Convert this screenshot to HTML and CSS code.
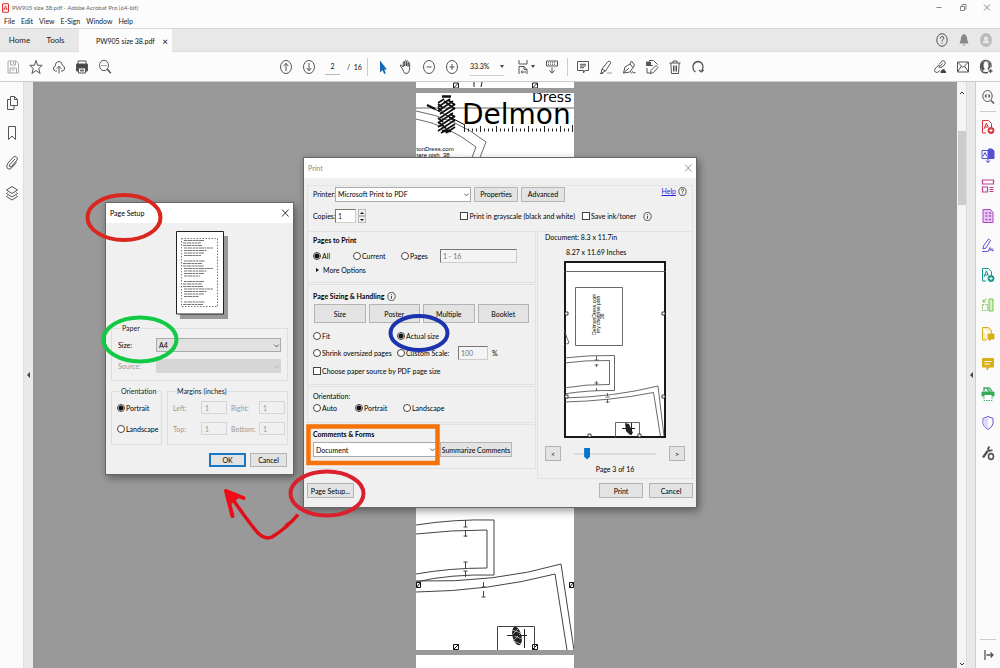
FILE: index.html
```html
<!DOCTYPE html>
<html lang="en">
<head>
<meta charset="utf-8">
<title>PW905 size 38.pdf - Adobe Acrobat Pro (64-bit)</title>
<link rel="stylesheet" href="styles.css">
</head>
<body>
<div class="app">
  <header class="titlebar">
    <svg class="logo" viewBox="0 0 8 11"><rect x=".6" y=".6" width="6.8" height="9.8" rx="1" fill="#fff" stroke="#d33" stroke-width="1.2"/><path d="M2 8 4 3l1.800 4.500M2 6.500h4" fill="none" stroke="#d33"/></svg>
    <span class="title">PW905 size 38.pdf - Adobe Acrobat Pro (64-bit)</span>
    <div class="wincontrols">
      <svg class="ic" viewBox="0 0 16 16"><path d="M5.500 7.500h5"/></svg>
      <svg class="ic" viewBox="0 0 16 16"><path d="M5.500 6.500h4v4h-4zM7 6V4.500h4V9H9.500"/></svg>
      <svg class="ic" viewBox="0 0 16 16"><path d="m5 4.500 6 6m0-6-6 6"/></svg>
    </div>
  </header>
  <nav class="menubar"><span>File</span><span>Edit</span><span>View</span><span>E-Sign</span><span>Window</span><span>Help</span></nav>
  <div class="tabs">
    <button class="tab">Home</button><button class="tab">Tools</button>
    <div class="doctab"><span>PW905 size 38.pdf</span><button class="close" aria-label="Close tab">×</button></div>
    <div class="account">
      <svg class="ic" viewBox="0 0 16 16"><ellipse cx="8" cy="8" rx="5.200" ry="6.300"/><path d="M6.300 6.500q0-2 1.800-2t1.700 1.700q0 1-1.700 2V9.500M8 10.800v1"/></svg>
      <svg class="ic" viewBox="0 0 16 16"><path d="M8 2q3.200 1 3.200 5.500L12.500 11.500h-9L4.800 7.500Q4.800 3 8 2zM6.500 12.500h3L8 14z" fill="#888" stroke="none"/></svg>
      <svg class="ic" viewBox="0 0 16 16"><ellipse cx="8" cy="8" rx="6" ry="7" fill="#bbb" stroke="none"/><path d="M8 4.500a1.800 2 0 0 1 1 3.800q2.500.5 2.500 3h-7q0-2.500 2.500-3A1.800 2 0 0 1 8 4.500z" fill="#e6e6e6" stroke="none"/></svg>
    </div>
  </div>
  <div class="toolbar">
    <div class="tools">
      <svg class="ic pale" viewBox="0 0 16 16"><path d="M3 2h8l2.500 2.500V14H3zM5.500 2v4h5V2M5 14V9h6.500v5M8.500 3v2M6.500 11h3"/></svg>
      <svg class="ic" viewBox="0 0 16 16"><path d="m8 1.500 1.600 4.800h4.600l-3.500 3.200 1.400 5L8 11.500l-4.100 3 1.400-5L1.800 6.300h4.600z"/></svg>
      <svg class="ic" viewBox="0 0 16 16"><path d="M6 12H4.500Q2 11.500 2.500 9 3 7 4.500 7 4 3 8 2.500q3 0 3.500 4Q14 7 13.500 10q-.5 2-2.500 2h-1M8 14.500V7.500M5.800 9.700 8 7.300l2.200 2.400"/></svg>
      <svg class="ic" viewBox="0 0 16 16"><path d="M4 5V2h8v3"/><path d="M2.500 5h11v7H12V8.500H4V12H2.500z" fill="#444"/><path d="M4.500 9h7v5h-7zM6.500 11h3v1h-3z"/></svg>
      <svg class="ic" viewBox="0 0 16 16"><ellipse cx="7" cy="6.500" rx="4.500" ry="5.200"/><path d="m10.200 10 3.600 4.300" stroke-width="1.600"/><path d="M4.500 6.500h5" stroke-dasharray="1 1"/></svg>
    </div>
    <div class="tools mid">
      <svg class="ic" viewBox="0 0 16 16"><ellipse cx="8" cy="8" rx="5.500" ry="6.500"/><path d="M8 12V4.500M5.700 7 8 4.300 10.300 7"/></svg>
      <svg class="ic" viewBox="0 0 16 16"><ellipse cx="8" cy="8" rx="5.500" ry="6.500"/><path d="M8 4v7.500M5.700 9 8 11.700 10.300 9"/></svg>
      <input class="pageno" value="2" aria-label="Page number"><span class="total">/ &nbsp;16</span>
      <i class="sep"></i>
      <svg class="ic" viewBox="0 0 16 16"><path d="M5 1.500v12l2.500-2.300 1.700 3.800 1.600-.8-1.500-3.700H12z" fill="#1769b5" stroke="none"/></svg>
      <svg class="ic" viewBox="0 0 16 16"><path d="m4.500 10-2-3Q2 5.500 3.500 6L5.300 8V3q.7-1.300 1.500 0v4V2q.8-1.300 1.700 0v5V2.500q.9-1.200 1.600 0V7.500V4q.9-1 1.600 0v5q.3 3-2 5.300h-3Q5.500 13 4.500 10z"/></svg>
      <svg class="ic" viewBox="0 0 16 16"><ellipse cx="8" cy="8" rx="5.500" ry="6.500"/><path d="M5.500 8h5"/></svg>
      <svg class="ic" viewBox="0 0 16 16"><ellipse cx="8" cy="8" rx="5.500" ry="6.500"/><path d="M5.500 8h5M8 5v6"/></svg>
      <button class="zoom">33.3% <i class="caret"></i></button>
      <button class="fit" aria-label="Fit page"><svg class="ic" viewBox="0 0 16 16"><path d="M4 1v4h8V1M4 15V7.500h5l3 3V15M9 7.500v3h3M6 13h5M7.500 11.500 6 13l1.500 1.500"/></svg><i class="caret"></i></button>
      <svg class="ic kb" viewBox="0 0 16 16"><path d="M2.500 2h11v5h-11z"/><path d="M4 3.700h8M4 5.300h8" stroke-dasharray="1 1"/><path d="M8 8.500v5.500M5.500 11.500 8 14.200l2.500-2.700"/></svg>
      <i class="sep"></i>
      <svg class="ic" viewBox="0 0 16 16"><path d="M2.500 2.500h11v9H10L8.500 14v-2.500h-6zM5 5.300h6M5 7h6M5 8.700h4"/></svg>
      <svg class="ic" viewBox="0 0 16 16"><path d="M9 14h5" stroke="#ccc" stroke-width="2"/><path d="m4 10 6-7.500q1.500-1 3 1L7.500 12 3 14.500zM4 10l3.500 2M2 14.500h3"/></svg>
      <svg class="ic" viewBox="0 0 16 16"><path d="M2.500 14 4 8l5-3 3 3.500-3 4.500zM2.500 14 8 9M9 5l1.500-3L13.500 6 12 8.500M10 14.500l1.500-2 1 1.500 2-.5"/></svg>
      <svg class="ic" viewBox="0 0 16 16"><path d="M2.500 3h4v3.500h-4z" fill="#555"/><path d="M5 1.500h4.500l4 4M3 9v5h4M5 6.500h4"/><path d="m7 11.500 5-5 2 2-4.500 5-3 1z" fill="#fff"/></svg>
      <svg class="ic" viewBox="0 0 16 16"><path d="M2.500 4h11M6 4V2h4v2M3.800 4l.7 10.500h7L12.200 4M6.500 6.500v6M8 6.500v6M9.500 6.500v6"/></svg>
      <svg class="ic" viewBox="0 0 16 16"><path d="M5.500 13Q2.500 11 3 7q.8-4 5-4.500Q12.500 3 13 7.500q0 2-1.500 5M9 11l2.300 2 2.400-2" stroke-width="1.300"/></svg>
    </div>
    <div class="tools end">
      <svg class="ic" viewBox="0 0 16 16"><path d="m6.500 9 4-4.500M7 5.500l3-3.500q2-1 3.200 1 .5 1.500-1 3L10 8.200Q8.500 9 7.500 8M8 7Q6 6 5 7.500L3 10q-1 1.500.3 3 1.500 1 3 0l1.400-1.500"/><path d="M8.500 14q-.5-2.500 1.500-3 2-2 3 .5 1.500.5 1 2.500z" fill="#444" stroke="none"/></svg>
      <svg class="ic" viewBox="0 0 16 16"><path d="M2.500 3h11v10h-11zl5.500 5.500L13.500 3M2.500 13 6.500 7M13.500 13l-4-6"/></svg>
      <svg class="ic" viewBox="0 0 16 16"><path d="M10 13.500Q2.500 15 2.500 8T8 1.500 13 7.500v1" stroke-width="1.300"/><path d="M3 5Q5 1.500 8 2 5.500 3 5.500 6.500q0 2.500 1.500 3.500l-2.500 2Q2.500 9.500 3 5zM10.500 6.500q0 2-1 3.500l1 .800L12 9V4.500L9 3q1.500 1.500 1.500 3.500z" fill="#555" stroke="none"/><path d="M12.500 10v4M10.500 12h4" stroke-width="1.300"/></svg>
    </div>
  </div>

  <main class="body">
    <aside class="leftrail">
      <svg class="ic" viewBox="0 0 16 16"><path d="M6.500 1.500h4l3 3v6h-7zM10.500 1.500v3h3M6.500 4.500h-3v10h6.500V11"/></svg>
      <svg class="ic" viewBox="0 0 16 16"><path d="M4.500 1.500h7v13L8 11l-3.500 3.500z"/></svg>
      <svg class="ic" viewBox="0 0 16 16"><path d="M11 4 5.500 10q-.5 1.500.5 2 1 .3 2-1l5-6q1-2-.5-3t-3 0L4 8q-2.500 3.500-.5 5.500 2 1.500 4-.5l5-6"/></svg>
      <svg class="ic" viewBox="0 0 16 16"><path d="m8 1.500 5.500 3.500L8 8.500 2.500 5zM3.500 7.500l-1 1L8 12l5.500-3.500-1-1M3.500 10.500l-1 1L8 15l5.500-3.500-1-1"/></svg>
    </aside>
    <div class="grip"><i class="tri"></i></div>
    <section class="canvas">
      <svg class="sheet sheet-top" viewBox="0 0 158 6"><path d="M37.500 1v5h5V1zm5 0-5 5M116.500 1v5h5V1zm5 0-5 5M58 0v5M66 0l-1 5" fill="none" stroke="#222"/></svg>
      <svg class="sheet" viewBox="0 0 158 557">
        <g fill="none" stroke="#444" stroke-width=".8">
          <path d="M0 15h158M0 18q40 7 70 31l-7 18M0 26q32 6 60 28l-5 13"/>
        </g>
        <g fill="none">
          <path d="M26 3.500h9M26 38h9" stroke="#111" stroke-width="2.500"/>
          <g stroke="#111" stroke-width="1.700">
            <path d="m22 10 6-4m-6 8 12-8m-12 12 15-10m-13 13 15-10m-15 14 15-10m-17 15 15-10m-15 14 17-11m-17 15 17-11m-14 13 14-9m-9 9 9-6"/>
            <path d="m32 7 7 5M28 8l11 8M22 11l5 4M22 15l4 3M33 24l6 4M34 21l5 3M22 29l8 6M22 25l5 4"/>
          </g>
          <path d="m11 12 38 20" stroke="#111"/><path d="m11 12 8 4" stroke="#111" stroke-width="2.500"/>
          <path d="M48 37h110" stroke="#222" stroke-width="3" stroke-dasharray="1 3"/><path d="M48.500 32v7m16-6v6m16-6v6m16-6v6m16-6v6m16-6v6m16-6v6m12-7v7" stroke="#222"/>
        </g>
        <text x="116" y="9" class="brand-small">Dress</text>
        <text x="46" y="31" class="brand">Delmon</text>
        <text x="-1" y="58" class="note">nonDress.com</text><text x="-1" y="64" class="note">nare pish &#160;38</text>
        <g fill="none" stroke="#444">
          <path d="M0 432q38-6 78-5v55q-45-1-78 7M0 441q35-4 71-4v38q-38 0-71 6" />
          <path d="M0 488q80 2 145-17l13 86M0 499q74-1 139-18l12 76"/>
          <path d="M49.500 427v7m-2 0h4m-2 3v7m-2-1h4M49.500 469v6m-2-6h4m-2 9v6m-2-6h4M67.500 489v5m-2 0h4m-2 4v6m-2 0h4"/>
          <path d="M.5 489.500h4v5h-4zm0 5 4-5M153.500 489.500h4v5h-4zm0 5 4-5M37.500 551.500h5v5h-5zm0 5 5-5M116.500 551.500h5v5h-5zm0 5 5-5" stroke="#111"/>
          <path d="M81.500 557v-23.500h37V557"/>
        </g>
        <ellipse cx="101" cy="543" rx="4.500" ry="9.500" transform="rotate(-14 101 543)" fill="#222"/><path d="m96 537 9 3m-9 2 10 4m-9 2 8 3M97 541l7-7m-6 13 8-8" stroke="#ccc" stroke-width=".7"/><path d="M91 542.500h20M108.500 536v19" stroke="#222"/>
      </svg>
      <div class="sheet sheet-next"></div>
    </section>
    <div class="scroll"><svg class="sa" viewBox="0 0 8 8"><path d="m2 5 2-2 2 2"/></svg><i class="thumb"></i><svg class="sa" viewBox="0 0 8 8"><path d="m2 3 2 2 2-2"/></svg></div>
    <div class="grip right"><i class="tri"></i></div>
    <aside class="rightrail">
      <div class="search"><svg class="ic" viewBox="0 0 16 16"><ellipse cx="7.500" cy="7" rx="4.700" ry="5.500"/><path d="m11 11.500 3 3" stroke-width="1.600"/><path d="M6.500 4.500v5L4.500 7zM8.500 4.500v5l2-2.500z" fill="#555" stroke="none"/></svg></div>
      <div class="apps">
        <svg class="ic red" viewBox="0 0 16 16"><path d="M2.500 1.500h6l3 3v4M6 14H2.500V1.500M4 10l2.500-6L8 8M4.500 8h4"/><circle cx="11" cy="11.500" r="3" fill="currentColor"/><path d="M9.300 11.500h3.400M11 9.800v3.400" stroke="#fff"/></svg>
        <svg class="ic indigo" viewBox="0 0 16 16"><path d="M2 2.500h6v8H2z"/><path d="M8.500 1h3.500l2 2v7.500H8.500z" fill="currentColor"/><path d="m3 8.500 2-4 2 4M8 9v5.500M6 12.500l2 2.200 2-2.200"/></svg>
        <svg class="ic pink" viewBox="0 0 16 16"><path d="M2.500 2h11v4h-11zM2.500 9h5v5h-5zM9.500 9.500h4M9.500 11.500h4M9.500 13.500h4" stroke-width="1.200"/></svg>
        <svg class="ic purple" viewBox="0 0 16 16"><path d="M3 1.500h7.500l2.500 3v10H3z" fill="#e8c8f3"/><path d="M5.500 5h2M9 5h2M5.500 8h2M9 8h2M5.500 11.500h2M9 11.500h2" stroke-width="1.700"/></svg>
        <svg class="ic violet" viewBox="0 0 16 16"><path d="m3.500 9 5-7 2 1.500L6 11l-3 1zM2 14.500h6l2-4v3l2-2v2.500l2-1"/></svg>
        <svg class="ic teal" viewBox="0 0 16 16"><path d="M2.500 1.500h6l3 3v4M6 14H2.500V1.500M4 10l2.500-6L8 8M4.500 8h4"/><circle cx="11" cy="11.500" r="3" fill="currentColor"/><path d="M9.300 11.500h3.400M11 9.800v3.400" stroke="#fff"/></svg>
        <svg class="ic lime" viewBox="0 0 16 16"><path d="M9 2h4v12H9z" fill="#d6f2c4"/><path d="M6.500 1.500 3 5M3 2.500V5h2.500"/><path d="M2.500 7.500h5v6h-5z" stroke-dasharray="1.500 1"/></svg>
        <svg class="ic gold" viewBox="0 0 16 16"><path d="M2.500 1.500h6l3 3v3M7 14H2.500V1.500" fill="#fbeaa8"/><path d="M8 8h6v5h-3l-1.500 1.700V13H8z" fill="currentColor"/></svg>
        <svg class="ic gold" viewBox="0 0 16 16"><path d="M2.500 2.500h11v8.500H9L7 14v-3H2.500z" fill="currentColor"/><path d="M4.500 5.500h7M4.500 8h5" stroke="#fff"/></svg>
        <svg class="ic green" viewBox="0 0 16 16"><path d="M4 5V2h5l3 3M7 3l3 3" stroke-width="1.300"/><path d="M2 6h12v4H2z" fill="currentColor"/><path d="M4 9v5.500h8V9" fill="#fff" stroke-dasharray="1.500 1"/></svg>
        <svg class="ic violet" viewBox="0 0 16 16"><path d="M8 1.500 13 3.500v5Q12.500 12 8 14.500 3.500 12 3 8.500v-5z"/><path d="M8 2v12Q4 12 3.500 8.500V4z" fill="#dcd8ff" stroke="none"/></svg>
        <svg class="ic" viewBox="0 0 16 16"><path d="m3 12.500 5-7" stroke-width="2.300"/><path d="M9.500 1.500 8 3.500 9.500 6l3-1" stroke-width="1.800"/><ellipse cx="11" cy="11.500" rx="2.500" ry="2.900" stroke-width="1.600"/></svg>
      </div>
      <div class="expand"><svg class="ic" viewBox="0 0 16 16"><path d="M5 3v10M6.500 8h6M10.500 5.500 13 8l-2.500 2.500" stroke-width="1.300"/></svg></div>
    </aside>
  </main>

  <section class="dialog print" aria-label="Print">
    <header class="dtitle muted"><span>Print</span><button aria-label="Close" class="x"><svg class="ic" viewBox="0 0 16 16"><path d="m5 4.500 6.500 7m0-7-6.500 7"/></svg></button></header>
    <form class="dbody">
      <div class="top">
        <div class="row"><label for="printer">Printer:</label><span class="sel printer"><select id="printer"><option>Microsoft Print to PDF</option></select><svg viewBox="0 0 8 8"><path d="m1.500 3 2.500 2.500L6.500 3"/></svg></span><button type="button" class="btn">Properties</button><button type="button" class="btn">Advanced</button><span class="help"><a href="#">Help</a><svg class="ic small" viewBox="0 0 16 16"><ellipse cx="8" cy="8" rx="6.500" ry="7.200"/><path d="M6 6q0-2.500 2-2.500T10 6q0 1-2 2v2M8 11.500V13"/></svg></span></div>
        <div class="row"><label for="copies">Copies:</label><input class="txt copies" id="copies" value="1"><span class="spin"><button type="button" aria-label="More"><i class="up"></i></button><button type="button" aria-label="Fewer"><i class="down"></i></button></span>
          <span class="checks"><label><input type="checkbox">Print in grayscale (black and white)</label><label><input type="checkbox">Save ink/toner</label><svg class="ic small" viewBox="0 0 16 16"><ellipse cx="8" cy="8" rx="6.500" ry="7.200"/><path d="M8 7v5M8 4v1.500" stroke-width="1.600"/></svg></span></div>
      </div>
      <div class="cols">
        <div class="left">
          <div class="panel pages"><h3>Pages to Print</h3>
            <div class="r3 p"><label><input type="radio" name="pg" checked>All</label><label><input type="radio" name="pg">Current</label><label><input type="radio" name="pg">Pages</label><input class="txt range" value="1 - 16" aria-label="Page range"></div>
            <button type="button" class="more"><i class="play"></i>More Options</button></div>
          <div class="panel sizing"><h3>Page Sizing &amp; Handling <svg class="ic small" viewBox="0 0 16 16"><ellipse cx="8" cy="8" rx="6.500" ry="7.200"/><path d="M8 7v5M8 4v1.500" stroke-width="1.600"/></svg></h3>
            <div class="modes"><button type="button" class="btn">Size</button><button type="button" class="btn">Poster</button><button type="button" class="btn">Multiple</button><button type="button" class="btn">Booklet</button></div>
            <div class="r2"><label><input type="radio" name="sz">Fit</label><label><input type="radio" name="sz" checked>Actual size</label><label><input type="radio" name="sz">Shrink oversized pages</label><label><input type="radio" name="sz">Custom Scale:</label><span class="scale"><input class="txt" value="100" aria-label="Scale">%</span></div>
            <label class="choose"><input type="checkbox">Choose paper source by PDF page size</label></div>
          <div class="panel orient"><h4>Orientation:</h4>
            <div class="r3 o"><label><input type="radio" name="or">Auto</label><label><input type="radio" name="or" checked>Portrait</label><label><input type="radio" name="or">Landscape</label></div></div>
          <div class="panel comments"><h3><label for="cf">Comments &amp; Forms</label></h3>
            <div class="row"><span class="sel doc"><select id="cf"><option>Document</option></select><svg viewBox="0 0 8 8"><path d="m1.500 3 2.500 2.500L6.500 3"/></svg></span><button type="button" class="btn">Summarize Comments</button></div></div>
        </div>
        <div class="rightcol">
          <p>Document: 8.3 x 11.7in</p><p class="dim">8.27 x 11.69 Inches</p>
          <svg class="preview" viewBox="0 0 102 177">
            <rect x="1" y="1" width="100" height="175" fill="#fff" stroke="#000" stroke-width="1.800"/>
            <g fill="none" stroke="#444" stroke-width=".8"><path d="M0 10.500h102M11.500 26.500h47v58h-47zM0 69l5 13-5 2M0 97q24-3 50.500-2.500v35Q24 129 0 133M0 102q22-3 45.500-2.500v24Q22 123 0 127M0 137q50-1 94-12l6 50M0 141q46-1 89.500-9.500l7 44"/><path d="M32.500 95v4m-2 0h4m-2 4v3m-2-2h4M32.500 120v4m-2-2h4m-2 5v3M43.500 132v3m-2 1h4m-2 2v4m-2-1h4M51.500 177v-15.500h24V177"/></g>
            <g fill="#fff" stroke="#111" stroke-width=".8"><path d="M1 51h3v3H1zM98 51h3v3h-3zM1 134h3v3H1zM98 134h3v3h-3zM24 173h3v3h-3zM74 173h3v3h-3z"/></g>
            <path d="m61 162 4 1 4 9-3 2-4-4z" fill="#222"/><path d="M58 167.500h13M67.500 162v12" stroke="#222"/>
            <g transform="translate(32 74) rotate(-90)" class="vnote"><text>DelmonDress.com</text><text x="2" y="4">my chemise pish</text><text x="16" y="8">38</text></g>
          </svg>
          <div class="slide"><button type="button" class="btn">&lt;</button><input type="range" min="1" max="16" value="3" aria-label="Page"><button type="button" class="btn">&gt;</button></div>
          <p class="count">Page 3 of 16</p>
        </div>
      </div>
      <footer class="foot"><button type="button" class="btn setup-btn">Page Setup...</button><button type="button" class="btn go">Print</button><button type="button" class="btn">Cancel</button></footer>
    </form>
  </section>

  <section class="dialog setup" aria-label="Page Setup">
    <header class="dtitle"><span>Page Setup</span><button aria-label="Close" class="x"><svg class="ic" viewBox="0 0 16 16"><path d="m5 4.500 6.500 7m0-7-6.500 7"/></svg></button></header>
    <form class="sbody">
      <svg class="mini" viewBox="0 0 52 88"><path d="M4 5h48v83H4z" fill="#999"/><path d="M.5.500h47v82.500H.5z" fill="#fff" stroke="#222"/><path d="M5.500 7.500h36v68h-36z" fill="none" stroke="#777" stroke-dasharray="1.500 1.500"/>
        <g stroke="#777" fill="none" stroke-width="1.100" stroke-dasharray="3 .5 5 .5 2 .5"><path d="M8 9.500h20M7 12h18M7 14.500h19M8 17h29M8 19.500h23M8 22h20M8 24.500h17M8 30h21M7 32.500h19M7 35h21M8 37.500h29M8 40h23M8 42.500h20M8 45h16M8 50.500h20M7 53h19M7 55.500h20M8 58h29M8 60.500h23M8 63h20M8 65.500h15M8 71h21M7 73.500h20"/></g></svg>
      <fieldset class="paper"><legend>Paper</legend>
        <label for="size">Size:</label><span class="sel gray"><select id="size"><option>A4</option></select><svg viewBox="0 0 8 8"><path d="m1.500 3 2.500 2.500L6.500 3"/></svg></span>
        <label for="src" class="off">Source:</label><span class="sel gray dis"><select id="src" disabled><option></option></select><svg viewBox="0 0 8 8"><path d="m1.500 3 2.500 2.500L6.500 3"/></svg></span>
      </fieldset>
      <div class="pair">
        <fieldset class="ori"><legend>Orientation</legend><label><input type="radio" name="so" checked>Portrait</label><label><input type="radio" name="so">Landscape</label></fieldset>
        <fieldset class="margins off"><legend>Margins (inches)</legend><label for="ml">Left:</label><input id="ml" value="1" disabled><label for="mr">Right:</label><input id="mr" value="1" disabled><label for="mt">Top:</label><input id="mt" value="1" disabled><label for="mb">Bottom:</label><input id="mb" value="1" disabled></fieldset>
      </div>
      <div class="sfoot"><button type="button" class="btn ok">OK</button><button type="button" class="btn">Cancel</button></div>
    </form>
  </section>

  <svg class="marks" viewBox="0 0 1000 668" fill="none">
    <ellipse cx="124" cy="217.500" rx="36.500" ry="22.500" stroke="#d9261f" stroke-width="4"/>
    <ellipse cx="140" cy="339.500" rx="36.500" ry="22" stroke="#12c944" stroke-width="4"/>
    <ellipse cx="419" cy="333" rx="28.500" ry="17" stroke="#1c33ae" stroke-width="4"/>
    <ellipse cx="327" cy="493.500" rx="36.500" ry="22" stroke="#d9202c" stroke-width="4"/>
    <path d="M308.500 426.500h129v36.500h-129z" stroke="#f57309" stroke-width="4.500"/>
    <path d="M298 514.500Q288 527 272 537q-7 3-14-4-9-10-31-42" stroke="#e10f18" stroke-width="3.500"/>
    <path d="m299.500 514.500-12 12-3-2z" fill="#e10f18"/>
    <path d="m226 491 17.500 7M226 491l6.500 25" stroke="#ee0c15" stroke-width="4" stroke-linecap="round"/>
    <path d="m225 490 14 8-8 6z" fill="#ee0c15"/>
  </svg>
</div>
</body>
</html>
```
FILE: styles.css
```css
* { box-sizing: border-box; }
html, body { height: 100%; margin: 0; }
body { font-family: Lato, "Liberation Sans", sans-serif; font-size: 7px; line-height: 10px; color: #111; }
button, input, select { font: inherit; color: inherit; margin: 0; padding: 0; border: 0; background: none; border-radius: 0; outline: 0; }
h3, h4, p { margin: 0; font-size: 7px; }
h4 { font-weight: normal; }
label { white-space: nowrap; }
.app { position: relative; display: flex; flex-direction: column; height: 100vh; overflow: hidden; background: #fcfcfc; }
.ic { width: 16px; height: 16px; flex: none; fill: none; stroke: #555; stroke-width: 1; color: #555; }
.small { width: 9px; height: 9px; stroke: #333; stroke-width: 1.4; }
.pale { stroke: #aaa; }

.titlebar { flex: none; display: flex; align-items: center; height: 15px; padding-left: 2px; color: #666; font-size: 6px; }
.logo { width: 7px; height: 10px; margin-right: 3px; }
.wincontrols { margin-left: auto; display: flex; gap: 8px; padding-right: 5px; }
.wincontrols .ic { stroke: #888; }
.menubar { flex: none; display: flex; gap: 6px; height: 13px; padding: 1px 4px; color: #222; }
.tabs { flex: none; display: flex; height: 24px; background: #e8e8e8; border-top: 1px solid #d8d8d8; border-bottom: 1px solid #ddd; }
.tab { font-size: 8px; width: 39px; color: #222; }
.tab + .tab { width: 40px; padding-right: 7px; }
.doctab { display: flex; align-items: center; justify-content: space-between; width: 93px; height: 24px; padding: 0 4px 0 17px; background: #fcfcfc; white-space: nowrap; }
.close { font-size: 10px; }
.account { margin-left: auto; display: flex; align-items: center; gap: 6px; padding-right: 6px; }
.toolbar { flex: none; display: grid; grid-template-columns: 1fr auto 1fr; align-items: center; height: 30px; border-bottom: 1px solid #ccc; }
.tools { display: flex; align-items: center; gap: 7px; padding-left: 5px; }
.mid { padding: 0; margin-right: 16px; }
.end { justify-content: flex-end; padding-right: 6px; }
.pageno { width: 15px; height: 16px; text-align: center; border-bottom: 1px solid #bbb; margin-left: 1px; }
.total { width: 13px; white-space: nowrap; }
.sep { width: 1px; height: 18px; background: #ccc; }
.zoom { width: 34px; height: 18px; margin-left: 3px; border-bottom: 1px solid #ccc; display: flex; align-items: center; justify-content: space-between; }
.fit { display: flex; align-items: center; margin-left: 4px; }
.kb { margin-left: 2px; }
.caret { border: 2px solid transparent; border-top: 3px solid #444; border-bottom: 0; }

.body { flex: 1; min-height: 0; display: flex; background: #fafafa; }
.leftrail { flex: none; width: 23px; padding: 13px 0 0 4px; display: flex; flex-direction: column; gap: 14px; }
.grip { flex: none; width: 10px; background: #e9e9e9; border-left: 1px solid #ddd; display: flex; align-items: center; justify-content: center; }
.tri { border: 3px solid transparent; border-right: 3px solid #444; border-left: 0; }
.right { border-right: 1px solid #ccc; }
.canvas { flex: 1; background: #999; display: flex; flex-direction: column; align-items: center; gap: 5px; overflow: hidden; }
.sheet { flex: none; width: 158px; background: #fff; }
.sheet-top { height: 6px; }
.sheet-next { height: 40px; }
.brand { font: 28px "DejaVu Sans", sans-serif; }
.brand-small { font: 14px "DejaVu Sans", sans-serif; }
.note { font: 6px "Liberation Sans", sans-serif; }
.scroll { flex: none; width: 9px; background: #f4f4f4; display: flex; flex-direction: column; align-items: center; padding-top: 7px; }
.sa { width: 8px; height: 8px; fill: none; stroke: #333; }
.sa:last-child { margin-top: auto; }
.thumb { width: 8px; height: 74px; background: #ccc; margin-top: 34px; }
.rightrail { flex: none; width: 24px; display: flex; flex-direction: column; align-items: center; }
.search { height: 30px; padding-top: 7px; border-bottom: 1px solid #ccc; }
.apps { height: 356px; display: grid; align-items: center; }
.expand { margin-top: auto; border-top: 1px solid #ccc; height: 29px; padding-top: 7px; }
.red { color: #d8323d; stroke: #d8323d; }
.indigo { color: #5650d8; stroke: #5650d8; }
.pink { stroke: #c2408f; }
.purple { stroke: #ad45c6; }
.violet { stroke: #6a50cc; }
.teal { color: #13968a; stroke: #13968a; }
.lime { stroke: #6ec644; }
.gold { color: #d8ae16; stroke: #d8ae16; }
.green { color: #35ab5b; stroke: #35ab5b; }

.dialog { position: absolute; background: #f0f0f0; border: 1px solid #666; box-shadow: 2px 3px 8px rgba(0,0,0,.4); color: #000; }
.dtitle { display: flex; align-items: center; justify-content: space-between; height: 20px; padding: 0 0 0 4px; background: #fff; }
.muted { color: #888; }
.x { height: 16px; }
.x .ic { stroke: #333; }
.muted .ic { stroke: #999; }
.btn { height: 15px; background: #e3e3e3; border: 1px solid #b4b4b4; white-space: nowrap; text-align: center; }
.row { display: flex; align-items: center; }
.sel { position: relative; display: flex; }
.sel select { appearance: none; width: 100%; height: 15px; padding-left: 2px; background: #fff; border: 1px solid #aaa; }
.sel svg { position: absolute; right: 1px; top: 4px; width: 7px; height: 7px; fill: none; stroke: #444; pointer-events: none; }
.txt { border: 1px solid #ccc; border-top-color: #777; border-left-color: #777; height: 14px; padding-left: 2px; background: #f4f4f4; color: #777; }
input[type=radio], input[type=checkbox] { appearance: none; flex: none; width: 8px; height: 8px; border: 1px solid #444; background: #fff; }
input[type=radio] { border-radius: 50%; }
input[type=radio]:checked { background: radial-gradient(circle, #111 0 2px, #fff 3px); }
.dialog label:has(input) { display: flex; align-items: center; gap: 1px; }

.print { left: 303px; top: 157px; width: 394px; }
.dbody { padding: 7px 3px 9px; }
.top { border: 1px solid #e4e4e4; border-bottom: 0; padding: 0 5px 5px; }
.top .row { height: 16px; gap: 2px; }
.top .row + .row { margin-top: 4px; height: 20px; }
.top .row > label { flex: none; width: 20px; }
.top .btn { width: 44px; margin-left: 1px; }
.printer { width: 136px; }
.help { margin-left: auto; display: flex; align-items: center; gap: 2px; padding-bottom: 6px; }
.help a { color: #22d; }
.copies { width: 21px; background: #fff; color: #222; }
.spin { display: grid; width: 8px; }
.spin button { height: 7px; border: 1px solid #bbb; display: grid; place-items: center; }
.up { border: 2px solid transparent; border-bottom: 2px solid #111; border-top: 0; }
.down { border: 2px solid transparent; border-top: 2px solid #111; border-bottom: 0; }
.checks { margin-left: auto; display: flex; align-items: center; gap: 7px; padding-right: 35px; }
.cols { display: grid; grid-template-columns: 229px 1fr; gap: 1px; }
.left { display: grid; gap: 1px; align-content: start; }
.panel { border: 1px solid #e2e2e2; padding: 3px 6px 0 5px; }
.pages { height: 52px; }
.r3 { display: grid; align-items: center; height: 17px; margin-top: 2px; }
.p { grid-template-columns: 40px 48px 39px 77px; }
.o { grid-template-columns: 42px 48px 1fr; height: 14px; }
.more { display: flex; align-items: center; gap: 4px; height: 12px; padding-left: 3px; }
.play { border: 2px solid transparent; border-left: 3px solid #111; border-right: 0; }
.sizing { height: 101px; padding-top: 6px; }
.sizing h3 { display: flex; align-items: center; gap: 2px; }
.modes { display: grid; grid-template-columns: repeat(4, 1fr); gap: 3px; margin: 3px 0 4px 1px; }
.modes .btn { height: 19px; }
.r2 { display: grid; grid-template-columns: 84px 61px 1fr; grid-template-rows: 17px 17px; align-items: center; }
.r2 label:nth-child(3) { grid-area: 2 / 1; }
.r2 label:nth-child(4) { grid-area: 2 / 2; }
.scale { grid-area: 2 / 3; display: flex; align-items: center; gap: 4px; }
.scale .txt { width: 30px; }
.choose { margin-top: 5px; }
.orient { height: 37px; padding-top: 4px; }
.orient .r3 { margin-top: 0; }
.comments { height: 45px; padding-top: 4px; }
.comments .row { gap: 3px; margin-top: 3px; }
.doc { width: 124px; }
.comments .btn { width: 72px; }
.rightcol { border: 1px solid #e2e2e2; padding: 0 7px; display: flex; flex-direction: column; height: 248px; }
.dim { margin: 5px 0 4px 21px; }
.preview { width: 102px; height: 177px; align-self: center; }
.vnote { font: 5px "Liberation Sans", sans-serif; }
.slide { display: flex; justify-content: space-between; align-items: center; margin-top: 8px; }
.slide .btn { width: 16px; }
.slide input { appearance: none; width: 82px; height: 14px; background: linear-gradient(#ddd, #ddd) center / 100% 2px no-repeat; }
.slide input::-webkit-slider-thumb { appearance: none; width: 6px; height: 12px; background: #0873ce; clip-path: polygon(0 0, 100% 0, 100% 75%, 50% 100%, 0 75%); }
.count { text-align: center; margin-top: 3px; }
.foot { display: flex; gap: 6px; padding-top: 4px; }
.foot .btn { width: 44px; }
.foot .setup-btn { width: 47px; }
.foot .go { margin-left: auto; }

.setup { left: 105px; top: 202px; width: 189px; }
.sbody { padding: 8px 5px 7px; }
.mini { display: block; width: 52px; height: 88px; margin: 0 auto 4px 65px; }
fieldset { margin: 0; padding: 0; min-width: 0; border: 1px solid #ddd; }
legend { padding: 0 1px; margin-left: 3px; color: #222; }
.paper { display: grid; grid-template-columns: 38px 1fr; row-gap: 7px; align-items: center; padding: 5px 6px 9px; height: 58px; }
.gray select { height: 14px; background: #e1e1e1; }
.dis select { background: #ccc; border-color: #ccc; }
.dis svg { stroke: #aaa; }
.off { color: #999; }
.pair { display: grid; grid-template-columns: 51px 1fr; gap: 5px; margin-top: 5px; }
.ori { display: grid; grid-template-rows: 21px 21px; padding: 1px 0 5px 5px; }
.margins { display: grid; grid-template-columns: 24px 26px 24px 26px; column-gap: 4px; grid-template-rows: 21px 21px; align-items: center; padding: 1px 4px 5px 5px; }
.margins input { width: 26px; height: 13px; padding-left: 3px; border: 1px solid #d5d5d5; }
.sfoot { display: flex; justify-content: flex-end; gap: 4px; padding: 8px 1px 0 0; }
.sfoot .btn { width: 37px; height: 14px; }
.sfoot .ok { border: 2px solid #1878c8; line-height: 9px; }
.marks { position: absolute; left: 0; top: 0; width: 1000px; height: 668px; pointer-events: none; }
```
